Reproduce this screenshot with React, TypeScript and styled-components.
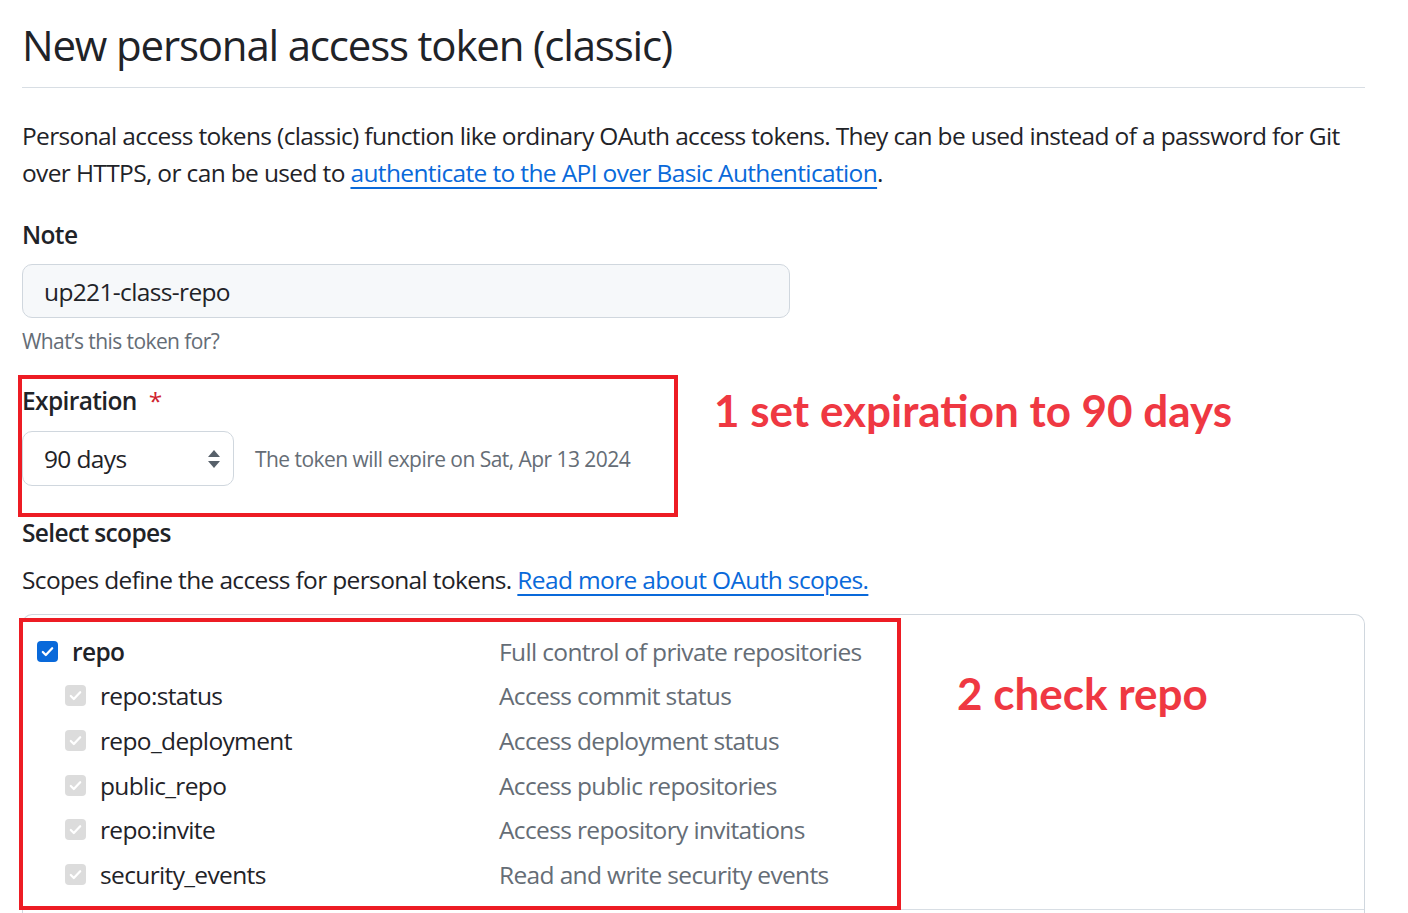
import React from "react";
import styled, { createGlobalStyle } from "styled-components";

const GlobalStyle = createGlobalStyle`
  html, body { margin: 0; padding: 0; background: #ffffff; }
  body {
    font-family: "Open Sans", "Noto Sans", "Liberation Sans", sans-serif;
    color: #1f2328;
    letter-spacing: -0.04em;
    -webkit-font-smoothing: antialiased;
  }
`;

const Page = styled.div`
  width: 1343px;
  padding: 19px 0 0 22px;
`;

const Header = styled.div`
  padding-bottom: 16px;
  border-bottom: 1px solid #d8dee4;
`;

const Title = styled.h1`
  margin: 0;
  font-size: 42px;
  line-height: 52px;
  font-weight: 400;
  letter-spacing: -0.028em;
  color: #1f2328;
`;

const Paragraph = styled.p<{ $top: number }>`
  margin: ${(p) => p.$top}px 0 0;
  font-size: 24.5px;
  line-height: 37px;
  color: #1f2328;
`;

const Link = styled.a`
  color: #0969da;
  text-decoration: underline;
  text-underline-offset: 5px;
  text-decoration-thickness: 2px;
`;

const Label = styled.div<{ $top: number }>`
  margin-top: ${(p) => p.$top}px;
  font-size: 24.5px;
  line-height: 36px;
  font-weight: 600;
  color: #1f2328;
`;

const Required = styled.span`
  color: #cf222e;
  margin-left: 12px;
  font-weight: 400;
`;

const TextInput = styled.div`
  margin-top: 11px;
  width: 768px;
  height: 54px;
  box-sizing: border-box;
  padding: 0 21px;
  display: flex;
  align-items: center;
  background: #f6f8fa;
  border: 1.5px solid #d0d7de;
  border-radius: 10px;
  font-size: 24.5px;
  color: #1f2328;
`;

const Hint = styled.div<{ $top: number }>`
  margin-top: ${(p) => p.$top}px;
  font-size: 21px;
  line-height: 32px;
  letter-spacing: -0.028em;
  color: #656d76;
`;

const AnnotatedRow = styled.div`
  display: flex;
  align-items: flex-start;
  margin-top: 18px;
`;

const Annotated = styled.div<{ $w: number }>`
  position: relative;
  width: ${(p) => p.$w}px;
  &::after {
    content: "";
    position: absolute;
    left: -4px;
    top: 0;
    right: 0;
    bottom: 0;
    border: 4px solid #ed1c24;
    pointer-events: none;
  }
`;

const ExpirationInner = styled.div`
  padding: 8px 0 31px 0;
`;

const ExpirationControls = styled.div`
  margin-top: 12px;
  display: flex;
  align-items: center;
  gap: 21px;
`;

const Select = styled.div`
  width: 212px;
  height: 55px;
  box-sizing: border-box;
  padding: 0 12px 0 21px;
  display: flex;
  align-items: center;
  justify-content: space-between;
  background: #ffffff;
  border: 1.5px solid #d0d7de;
  border-radius: 10px;
  font-size: 24.5px;
  color: #1f2328;
`;

const Note = styled.span`
  font-size: 21px;
  letter-spacing: -0.026em;
  color: #656d76;
`;

const AnnotationText = styled.div<{ $size: number }>`
  font-family: "Lato", "Open Sans", sans-serif;
  font-weight: 700;
  font-size: ${(p) => p.$size}px;
  letter-spacing: 0;
  line-height: 1;
  color: #ef3842;
  white-space: nowrap;
`;

const FirstAnnotation = styled(AnnotationText)`
  margin: 13px 0 0 36px;
`;

const ScopesBox = styled.div`
  margin-top: 16px;
  border: 1.5px solid #d0d7de;
  border-bottom: none;
  border-radius: 10px 10px 0 0;
  height: 300px;
`;

const ScopeGroup = styled.div`
  position: relative;
  border-bottom: 1.5px solid #d8dee4;
  padding: 14px 0 0 0;
  height: 295px;
  box-sizing: border-box;
`;

const GroupOverlay = styled.div`
  position: absolute;
  left: -4px;
  top: 3px;
  width: 882px;
  height: 292px;
  box-sizing: border-box;
  border: 4px solid #ed1c24;
  pointer-events: none;
`;

const SecondAnnotation = styled(AnnotationText)`
  position: absolute;
  left: 934px;
  top: 56px;
`;

const ScopeRow = styled.div<{ $child?: boolean }>`
  display: grid;
  grid-template-columns: ${(p) => (p.$child ? "434px" : "462px")} 1fr;
  align-items: center;
  height: 44.6px;
  padding-left: ${(p) => (p.$child ? "42px" : "14px")};
`;

const ScopeName = styled.label<{ $strong?: boolean }>`
  display: flex;
  align-items: center;
  gap: 14px;
  font-size: 24.5px;
  font-weight: ${(p) => (p.$strong ? 600 : 400)};
  color: #1f2328;
`;

const ScopeDesc = styled.span`
  font-size: 24.5px;
  color: #656d76;
`;

const Box = styled.span<{ $on?: boolean }>`
  width: 21px;
  height: 21px;
  border-radius: 4px;
  background: ${(p) => (p.$on ? "#0969da" : "#dcdcdc")};
  display: inline-flex;
  align-items: center;
  justify-content: center;
  flex: none;
`;

const Check = ({ on }: { on?: boolean }) => (
  <Box $on={on}>
    <svg width="15" height="15" viewBox="0 0 16 16" fill="none">
      <path d="M3 8.5l3.2 3.2L13 4.5" stroke="#ffffff" strokeWidth="2.4" strokeLinecap="round" strokeLinejoin="round" />
    </svg>
  </Box>
);

const Arrows = () => (
  <svg width="14" height="20" viewBox="0 0 14 20">
    <path d="M7 1L13 8H1z" fill="#57606a" />
    <path d="M7 19L13 12H1z" fill="#57606a" />
  </svg>
);

const children = [
  ["repo:status", "Access commit status"],
  ["repo_deployment", "Access deployment status"],
  ["public_repo", "Access public repositories"],
  ["repo:invite", "Access repository invitations"],
  ["security_events", "Read and write security events"],
];

export default function App() {
  return (
    <>
      <GlobalStyle />
      <Page>
        <Header>
          <Title>New personal access token (classic)</Title>
        </Header>
        <Paragraph $top={29}>
          Personal access tokens (classic) function like ordinary OAuth access tokens. They can be used instead of a password for Git over HTTPS, or can be used to{" "}
          <Link href="#">authenticate to the API over Basic Authentication</Link>.
        </Paragraph>
        <Label $top={26}>Note</Label>
        <TextInput>up221-class-repo</TextInput>
        <Hint $top={7}>What’s this token for?</Hint>
        <AnnotatedRow>
          <Annotated $w={656}>
            <ExpirationInner>
              <Label $top={0}>
                Expiration<Required>*</Required>
              </Label>
              <ExpirationControls>
                <Select>
                  <span>90 days</span>
                  <Arrows />
                </Select>
                <Note>The token will expire on Sat, Apr 13 2024</Note>
              </ExpirationControls>
            </ExpirationInner>
          </Annotated>
          <FirstAnnotation $size={44}>1 set expiration to 90 days</FirstAnnotation>
        </AnnotatedRow>
        <Label $top={-2}>Select scopes</Label>
        <Paragraph $top={10}>
          Scopes define the access for personal tokens.{" "}
          <Link href="#">Read more about OAuth scopes.</Link>
        </Paragraph>
        <ScopesBox>
          <ScopeGroup>
            <ScopeRow>
              <ScopeName $strong>
                <Check on />
                repo
              </ScopeName>
              <ScopeDesc>Full control of private repositories</ScopeDesc>
            </ScopeRow>
            {children.map(([name, desc]) => (
              <ScopeRow key={name} $child>
                <ScopeName>
                  <Check />
                  {name}
                </ScopeName>
                <ScopeDesc>{desc}</ScopeDesc>
              </ScopeRow>
            ))}
            <GroupOverlay />
            <SecondAnnotation $size={44}>2 check repo</SecondAnnotation>
          </ScopeGroup>
        </ScopesBox>
      </Page>
    </>
  );
}
